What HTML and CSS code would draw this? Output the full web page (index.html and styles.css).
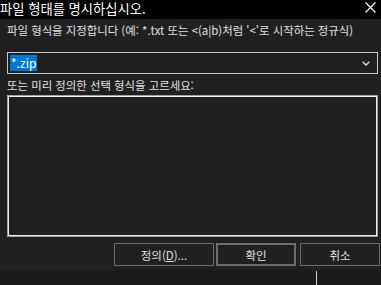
FILE: index.html
```html
<!DOCTYPE html>
<html lang="ko">

<head>
    <meta charset="UTF-8">
    <title>파일 형태를 명시하십시오.</title>
    <link rel="stylesheet" href="styles.css">
</head>

<body>
    <div class="titlebar">
        <span class="title">파일 형태를 명시하십시오.</span>
        <svg class="close" width="11" height="11" viewBox="0 0 11 11">
            <path d="M0.5 0.5 L10.5 10.5 M10.5 0.5 L0.5 10.5" stroke="#ffffff" stroke-width="1.2" fill="none"/>
        </svg>
    </div>

    <div class="dialog">
        <p class="label first">파일 형식을 지정합니다 (예: *.txt 또는 &lt;(a|b)처럼 '&lt;'로 시작하는 정규식)</p>

        <div class="combo">
            <span class="selected">*.zip</span>
            <svg class="chevron" width="8" height="5" viewBox="0 0 8 5">
                <path d="M0.7 0.7 L4 4 L7.3 0.7" stroke="#e0e0e0" stroke-width="1.3" fill="none"/>
            </svg>
        </div>

        <p class="label second">또는 미리 정의한 선택 형식을 고르세요:</p>

        <div class="listbox"></div>

        <div class="buttons">
            <button class="btn define">정의(<u>D</u>)...</button>
            <button class="btn ok">확인</button>
            <button class="btn cancel">취소</button>
        </div>
    </div>

    <div class="footer">
        <div class="caret"></div>
    </div>
</body>

</html>
```

FILE: styles.css
```css
body {
    margin: 0;
    width: 381px;
    height: 285px;
    overflow: hidden;
    background-color: #1b1b1b;
    font-family: "Noto Sans CJK KR", "Noto Sans", sans-serif;
    color: #e0e0e0;
}

.titlebar {
    height: 19px;
    background-color: #000;
    display: flex;
    justify-content: space-between;
    align-items: flex-start;
}

.title {
    font-size: 13.3px;
    line-height: 17px;
    color: #fff;
    white-space: nowrap;
}

.close {
    margin: 2px 5px 0 0;
}

.dialog {
    height: 251px;
    background-color: #202020;
    padding: 0 3px 0 7px;
    box-sizing: border-box;
    display: flex;
    flex-direction: column;
}

.label {
    margin: 0;
    font-size: 11.4px;
    line-height: 14px;
    white-space: nowrap;
}

.label.first {
    margin-top: 4px;
}

.combo {
    margin-top: 15px;
    height: 22px;
    border: 1px solid #c8c8c8;
    box-sizing: border-box;
    display: flex;
    align-items: center;
    justify-content: space-between;
    padding: 0 7px 0 2px;
}

.selected {
    background-color: #0078d7;
    color: #fff;
    font-size: 12px;
    line-height: 16px;
    padding: 0 1px;
}

.label.second {
    margin-top: 4px;
}

.listbox {
    margin-top: 3px;
    height: 142px;
    border: 1px solid #a0a0a0;
    outline: 1px solid #f0f0f0;
    outline-offset: -2px;
    box-sizing: border-box;
}

.buttons {
    margin-top: 6px;
    display: flex;
    justify-content: flex-end;
    gap: 2px;
}

.btn {
    height: 23px;
    background-color: #202020;
    border: 1px solid #6b6b6b;
    color: #e0e0e0;
    font-family: "Noto Sans CJK KR", "Noto Sans", sans-serif;
    font-size: 11.5px;
    padding: 0;
}

.define {
    width: 100px;
}

.ok {
    width: 80px;
    border: 2px solid #6e6e6e;
}

.cancel {
    width: 80px;
    margin-left: 2px;
    margin-right: -2px;
}

.footer {
    height: 15px;
    position: relative;
}

.caret {
    position: absolute;
    left: 316px;
    top: 1px;
    width: 1px;
    height: 14px;
    background-color: #d0d0d0;
}
```
